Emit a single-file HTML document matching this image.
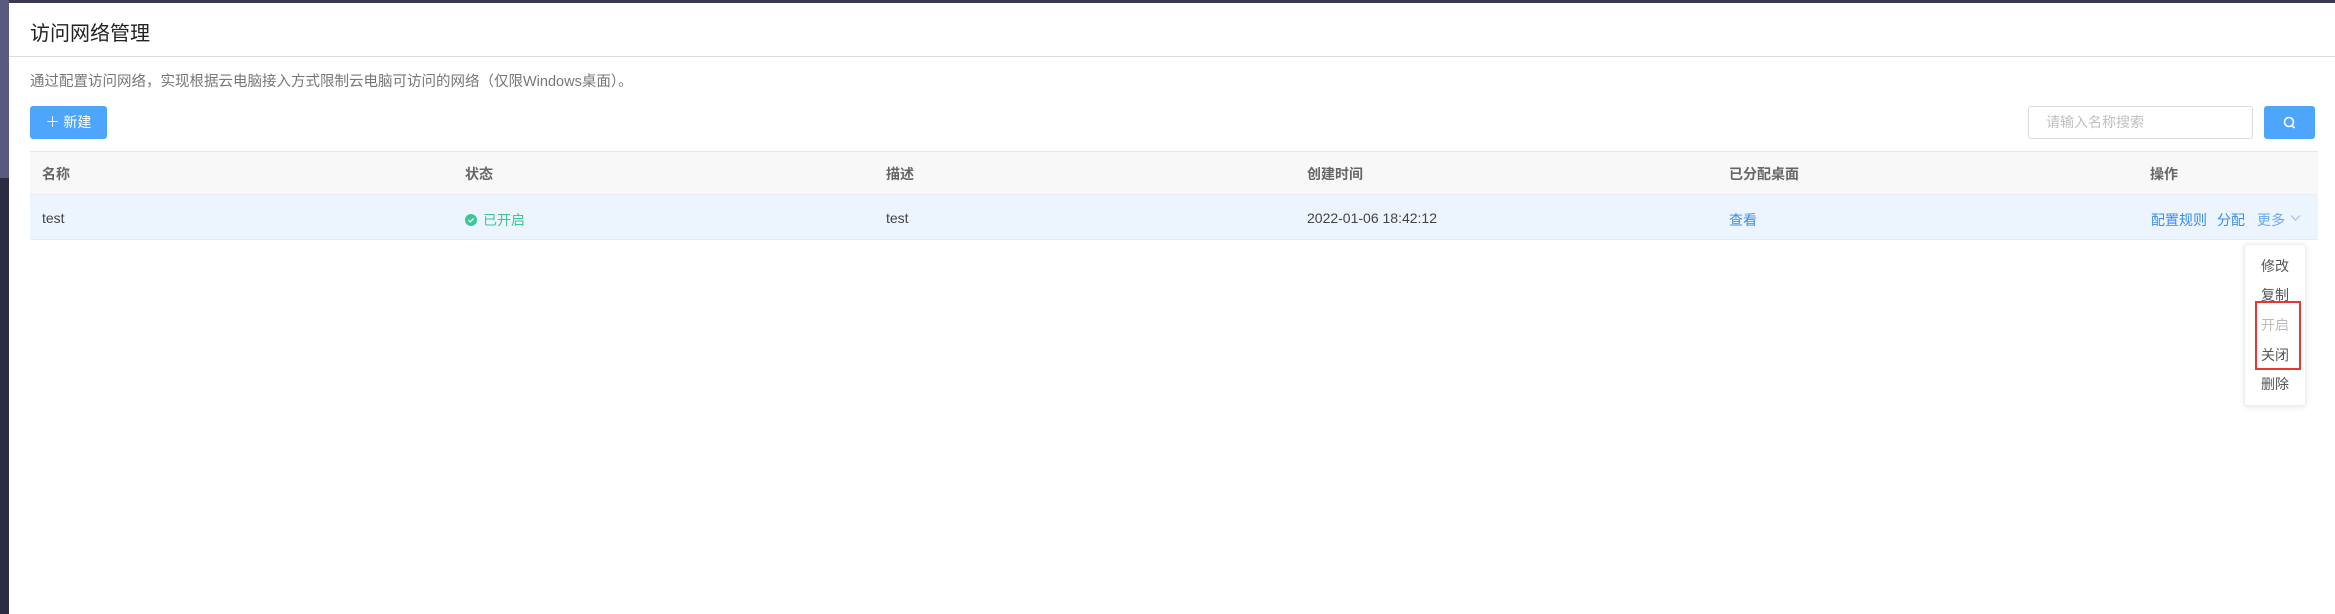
<!DOCTYPE html>
<html><head><meta charset="utf-8"><style>
*{margin:0;padding:0;box-sizing:border-box}
body{width:2335px;height:614px;background:#fff;position:relative;overflow:hidden;font-family:"Liberation Sans","Noto Sans CJK SC",sans-serif;font-size:14px;color:#555}
.a{position:absolute;white-space:nowrap}
</style></head><body>
<div class="a" style="left:0;top:0;width:2335px;height:3px;background:#3a3a55"></div>
<div class="a" style="left:0;top:0;width:9px;height:178px;background:#5a5a80"></div>
<div class="a" style="left:0;top:178px;width:9px;height:436px;background:#2b2b42"></div>
<div class="a" style="left:30px;top:17px;font-size:20px;color:#222">访问网络管理</div>
<div class="a" style="left:9px;top:56px;width:2326px;height:1px;background:#ddd"></div>
<div class="a" style="left:30px;top:70px;font-size:14.5px;color:#777">通过配置访问网络，实现根据云电脑接入方式限制云电脑可访问的网络（仅限Windows桌面）。</div>
<div class="a" style="left:30px;top:106px;width:77px;height:33px;background:#4da6fb;border-radius:3px;color:#fff;font-size:14px;line-height:33px;text-align:center">＋ 新建</div>
<div class="a" style="left:2028px;top:106px;width:225px;height:33px;border:1px solid #dcdcdc;border-radius:3px;color:#c0c0c0;font-size:14px;line-height:31px;padding-left:17px">请输入名称搜索</div>
<div class="a" style="left:2264px;top:106px;width:51px;height:33px;background:#4da6fb;border-radius:3px"><svg width="51" height="33"><circle cx="25" cy="16" r="4.5" fill="none" stroke="#fff" stroke-width="1.6"/><path d="M28 19.5l2.5 2.5" stroke="#fff" stroke-width="1.6"/></svg></div>
<div class="a" style="left:30px;top:151px;width:2288px;height:44px;background:#f8f8f8;border-top:1px solid #e6e6e6;border-bottom:1px solid #e8eef8"></div>
<div class="a" style="left:30px;top:195px;width:2288px;height:45px;background:#ecf4fe;border-bottom:1px solid #e3ebf5"></div>
<div class="a" style="left:42px;top:164px;font-weight:bold;color:#666">名称</div>
<div class="a" style="left:465px;top:164px;font-weight:bold;color:#666">状态</div>
<div class="a" style="left:886px;top:164px;font-weight:bold;color:#666">描述</div>
<div class="a" style="left:1307px;top:164px;font-weight:bold;color:#666">创建时间</div>
<div class="a" style="left:1729px;top:164px;font-weight:bold;color:#666">已分配桌面</div>
<div class="a" style="left:2150px;top:164px;font-weight:bold;color:#666">操作</div>
<div class="a" style="left:42px;top:210px;color:#444">test</div>
<div class="a" style="left:465px;top:210px;color:#3cc697"><span style="display:inline-block;width:12px;height:12px;border-radius:50%;background:#3cc697;vertical-align:-1px;margin-right:6px;position:relative"><svg width="12" height="12" style="position:absolute;left:0;top:0"><path d="M3.5 6.2l1.8 1.8 3.3-3.5" fill="none" stroke="#fff" stroke-width="1.3"/></svg></span>已开启</div>
<div class="a" style="left:886px;top:210px;color:#444">test</div>
<div class="a" style="left:1307px;top:210px;color:#444">2022-01-06 18:42:12</div>
<div class="a" style="left:1729px;top:210px;color:#3a8ef0">查看</div>
<div class="a" style="left:2151px;top:210px;color:#3a8ef0">配置规则</div>
<div class="a" style="left:2217px;top:210px;color:#3a8ef0">分配</div>
<div class="a" style="left:2257px;top:210px;color:#6aa8f0">更多</div>
<svg class="a" style="left:2290px;top:214px" width="11" height="8"><path d="M1 1.5l4.5 4.5 4.5-4.5" fill="none" stroke="#9cc3f0" stroke-width="1.2"/></svg>
<div class="a" style="left:2244px;top:244px;width:62px;height:162px;background:#fff;border:1px solid #eee;border-radius:3px;box-shadow:0 1px 6px rgba(0,0,0,.1)"></div>
<div class="a" style="left:2261px;top:256px;color:#555">修改</div>
<div class="a" style="left:2261px;top:285px;color:#555">复制</div>
<div class="a" style="left:2261px;top:315px;color:#bbb">开启</div>
<div class="a" style="left:2261px;top:345px;color:#555">关闭</div>
<div class="a" style="left:2261px;top:374px;color:#555">删除</div>
<div class="a" style="left:2255px;top:301px;width:46px;height:69px;border:2px solid #ee3333"></div>
</body></html>
